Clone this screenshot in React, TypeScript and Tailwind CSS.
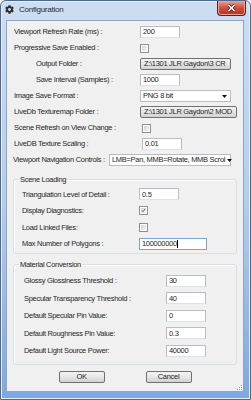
import React from 'react';
import { FaCog } from 'react-icons/fa';

const ui = "font-['Liberation_Sans',Arial,sans-serif] text-[7.5px] tracking-[-0.3px] text-[#262626] leading-none";

function TextBox({ value, w = 40, caret = false, focused = false }: { value: string; w?: number; caret?: boolean; focused?: boolean }) {
  return (
    <div
      className={`h-[12px] bg-white border flex items-center pl-[2px] ${
        focused ? 'border-[#7aa6cf]' : 'border-[#b8bcc4] border-b-[#dde2e8]'
      }`}
      style={{ width: w }}
    >
      <span>{value}</span>
      {caret && <span className="w-px h-[8px] bg-black ml-[0.5px]" />}
    </div>
  );
}

function CheckBox({ checked = false }: { checked?: boolean }) {
  return (
    <div className="w-[9px] h-[9px] border border-[#8e8f8f] bg-white p-px">
      <div className="w-full h-full bg-gradient-to-br from-[#d4d4d4] to-[#f6f6f6] relative">
        {checked && (
          <svg viewBox="0 0 7 7" className="absolute inset-0 w-full h-full">
            <path d="M1.2 3.6 L2.8 5.3 L5.8 1.2" fill="none" stroke="#3a4f8c" strokeWidth="1.2" />
          </svg>
        )}
      </div>
    </div>
  );
}

function PushButton({ label, w, left = false }: { label: string; w: number; left?: boolean }) {
  return (
    <div
      className={`h-[12px] rounded-[2px] border border-[#707070] bg-gradient-to-b from-[#f3f3f3] via-[#e6e6e6] to-[#d2d2d2] flex items-center overflow-hidden whitespace-nowrap ${
        left ? 'pl-[3px]' : 'justify-center'
      }`}
      style={{ width: w }}
    >
      {label}
    </div>
  );
}

function Combo({ value, w }: { value: string; w: number }) {
  return (
    <div
      className="h-[12px] bg-white border border-[#b8bcc4] flex items-center pl-[2px] pr-[3px] gap-[2px]"
      style={{ width: w }}
    >
      <span className="flex-1 whitespace-nowrap">{value}</span>
      <svg width="5" height="3" viewBox="0 0 5 3" className="shrink-0">
        <path d="M0 0 H5 L2.5 3 Z" fill="#111" />
      </svg>
    </div>
  );
}

function Row({ label, labelW, pad, h = 'h-[16px]', children }: { label: string; labelW: number; pad: number; h?: string; children: React.ReactNode }) {
  return (
    <div className={`flex items-center ${h}`}>
      <span className="shrink-0 whitespace-nowrap" style={{ width: labelW, paddingLeft: pad }}>
        {label}
      </span>
      {children}
    </div>
  );
}

function GroupBox({ title, children, className }: { title: string; children: React.ReactNode; className: string }) {
  return (
    <div className={`relative mx-[6px] rounded-[3px] border border-[#d5dfe5] shadow-[inset_1px_1px_0_#ffffff] ${className}`}>
      <span className="absolute -top-[4px] left-[5px] px-[1px] bg-[#f0f0f0]">{title}</span>
      {children}
    </div>
  );
}

export default function App() {
  return (
    <div className={`w-[251px] h-[400px] ${ui}`}>
      <div className="w-full h-full flex flex-col rounded-t-[6px] border border-[#4b6a91] bg-gradient-to-b from-[#cddef2] via-[#b6cdea] to-[#7ea8de] shadow-[inset_0_0_0_1px_#e6eefa]">
        {/* Title bar */}
        <div className="h-[19px] flex items-start shrink-0">
          <div className="flex items-center h-[17px] pl-[4px] gap-[5px] flex-1">
            <FaCog className="w-[9px] h-[9px] text-[#2f2f2f]" />
            <span className="text-[8px] tracking-[-0.25px] text-[#1b2a3c]">Configuration</span>
          </div>
          <div className="w-[29px] h-[15px] mr-[4px] rounded-b-[4px] border border-t-0 border-[#5a2020] bg-gradient-to-b from-[#e7a395] via-[#c94f3d] to-[#b8331f] flex items-center justify-center shadow-[inset_0_0_0_1px_#eaa397]">
            <svg width="9" height="8" viewBox="0 0 9 8">
              <path d="M1.5 1 L7.5 7 M7.5 1 L1.5 7" stroke="#3b1717" strokeWidth="3" />
              <path d="M1.5 1 L7.5 7 M7.5 1 L1.5 7" stroke="#ffffff" strokeWidth="1.6" />
            </svg>
          </div>
        </div>

        {/* Client area */}
        <div className="flex-1 ml-[5px] mr-[6px] mb-[7px] bg-[#f0f0f0] border border-[#8aa5c6] flex flex-col pt-[3px] relative">
          <Row label="Viewport Refresh Rate (ms) :" labelW={133} pad={7}>
            <TextBox value="200" />
          </Row>
          <Row label="Progressive Save Enabled :" labelW={133} pad={7}>
            <CheckBox />
          </Row>
          <Row label="Output Folder :" labelW={133} pad={29}>
            <PushButton label="Z:\1301 JLR Gaydon\3 CR" w={91} left />
          </Row>
          <Row label="Save Interval (Samples) :" labelW={133} pad={29}>
            <TextBox value="1000" />
          </Row>
          <Row label="Image Save Format :" labelW={133} pad={7}>
            <Combo value="PNG 8 bit" w={91} />
          </Row>
          <Row label="LiveDb Texturemap Folder :" labelW={133} pad={7}>
            <PushButton label="Z:\1301 JLR Gaydon\2 MOD" w={97} left />
          </Row>
          <Row label="Scene Refresh on View Change :" labelW={135} pad={7}>
            <CheckBox />
          </Row>
          <Row label="LiveDB Texture Scaling :" labelW={135} pad={7}>
            <TextBox value="0.01" />
          </Row>
          <Row label="Viewport Navigation Controls :" labelW={102} pad={6}>
            <Combo value="LMB=Pan, MMB=Rotate, MMB Scrol" w={122} />
          </Row>

          <GroupBox title="Scene Loading" className="mt-[11px] pt-[6px] pb-px">
            <Row label="Triangulation Level of Detail :" labelW={125} pad={8} h="h-[16.5px]">
              <TextBox value="0.5" />
            </Row>
            <Row label="Display Diagnostics:" labelW={125} pad={8} h="h-[16.5px]">
              <CheckBox checked />
            </Row>
            <Row label="Load Linked Files:" labelW={125} pad={8} h="h-[16.5px]">
              <CheckBox />
            </Row>
            <Row label="Max Number of Polygons :" labelW={125} pad={8} h="h-[16.5px]">
              <TextBox value="100000000" w={68} caret focused />
            </Row>
          </GroupBox>

          <GroupBox title="Material Conversion" className="mt-[10px] pt-[7px] pb-[4px]">
            <Row label="Glossy Glossiness Threshold :" labelW={152} pad={10} h="h-[17.5px]">
              <TextBox value="30" />
            </Row>
            <Row label="Specular Transparency Threshold :" labelW={152} pad={10} h="h-[17.5px]">
              <TextBox value="40" />
            </Row>
            <Row label="Default Specular Pin Value:" labelW={152} pad={10} h="h-[17.5px]">
              <TextBox value="0" />
            </Row>
            <Row label="Default Roughness Pin Value:" labelW={152} pad={10} h="h-[17.5px]">
              <TextBox value="0.3" />
            </Row>
            <Row label="Default Light Source Power:" labelW={152} pad={10} h="h-[17.5px]">
              <TextBox value="40000" />
            </Row>
          </GroupBox>

          <div className="flex justify-center gap-[41px] mt-[6px]">
            <PushButton label="OK" w={46} />
            <PushButton label="Cancel" w={46} />
          </div>

          {/* size grip */}
          <div className="absolute right-[1px] bottom-[1px] grid grid-cols-3 gap-px w-[5px] h-[5px]">
            <span />
            <span />
            <span className="w-px h-px bg-[#a0a0a0]" />
            <span />
            <span className="w-px h-px bg-[#a0a0a0]" />
            <span className="w-px h-px bg-[#a0a0a0]" />
            <span className="w-px h-px bg-[#a0a0a0]" />
            <span className="w-px h-px bg-[#a0a0a0]" />
            <span className="w-px h-px bg-[#a0a0a0]" />
          </div>
        </div>
      </div>
    </div>
  );
}
